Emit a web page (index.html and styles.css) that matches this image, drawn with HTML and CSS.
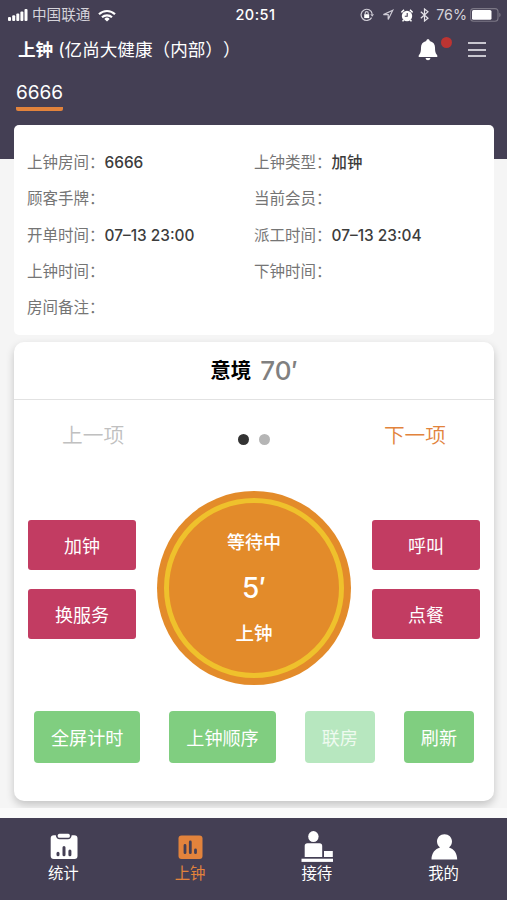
FILE: index.html
```
<!DOCTYPE html>
<html lang="zh-CN">
<head>
<meta charset="UTF-8">
<meta name="viewport" content="width=device-width, initial-scale=1">
<link rel="stylesheet" href="styles.css">
<title>上钟</title>
</head>
<body>

<header class="header">
  <div class="status-bar">
    <div class="status-left">
      <svg class="signal" width="20" height="12" viewBox="0 0 20 12" fill="#fff">
        <rect x="0" y="8" width="3" height="4" rx="1"/>
        <rect x="4.2" y="6.3" width="3" height="5.7" rx="1"/>
        <rect x="8.3" y="4.5" width="3" height="7.5" rx="1"/>
        <rect x="12.4" y="2.4" width="3" height="9.6" rx="1"/>
        <rect x="16.5" y="0" width="3" height="12" rx="1"/>
      </svg>
      <span class="carrier">中国联通</span>
      <svg width="18" height="13" viewBox="0 0 18 13" fill="none" stroke="#fff" stroke-width="2.2">
        <path d="M1 5.2A11.6 11.6 0 0 1 17 5.2"/>
        <path d="M4 8.3A7.2 7.2 0 0 1 14 8.3"/>
        <path d="M9 12.6L6.3 9.9A3.9 3.9 0 0 1 11.7 9.9Z" fill="#fff" stroke="none"/>
      </svg>
    </div>
    <div class="clock">20:51</div>
    <div class="status-right">
      <svg width="14" height="14" viewBox="0 0 14 14" fill="none" stroke="#cfccd6" stroke-width="1.2">
        <path d="M11.6 9.6A5.6 5.6 0 1 1 12.2 5.8"/>
        <path d="M10.3 6.2H14L12.2 8.8Z" fill="#cfccd6" stroke="none"/>
        <rect x="4.2" y="6.2" width="5" height="3.9" fill="#fff" stroke="none"/>
        <path d="M5.2 6.4V5.2a1.5 1.5 0 0 1 3 0V6.4"/>
      </svg>
      <svg class="arrow" width="12" height="12" viewBox="0 0 12 12" fill="none" stroke="#cfccd6" stroke-width="1.2">
        <path d="M10.8 1.2L1.4 5.6H6.2V10.6Z"/>
      </svg>
      <svg class="alarm" width="12" height="13" viewBox="0 0 12 13" fill="#fff">
        <circle cx="6" cy="7" r="5.2"/>
        <path d="M.4 3.4L3 .8M11.6 3.4L9 .8M2.6 11l-1 1.4M9.4 11l1 1.4" stroke="#fff" stroke-width="1.5"/>
        <path d="M6.2 4V7.3H3.8" fill="none" stroke="#443f54" stroke-width="1.1"/>
      </svg>
      <svg class="bluetooth" width="9" height="14" viewBox="0 0 9 14" fill="none" stroke="#e4e2e8" stroke-width="1.2">
        <path d="M.8 3.8L8 10.2L4.5 13V1L8 3.8L.8 10.2"/>
      </svg>
      <span class="percent">76%</span>
      <svg class="battery" width="31" height="14" viewBox="0 0 31 14">
        <rect x=".6" y=".6" width="27.4" height="12.6" rx="3" fill="none" stroke="#7b7785" stroke-width="1.1"/>
        <rect x="2" y="2" width="19.5" height="9.8" rx="1.5" fill="#fff"/>
        <path d="M29.3 4.8v4.4q1.3-.6 1.3-2.2t-1.3-2.2z" fill="#7b7785"/>
      </svg>
    </div>
  </div>

  <div class="title-bar">
    <h1><b>上钟</b> <span class="store">(亿尚大健康（内部））</span></h1>
    <div class="actions">
      <div class="bell">
        <svg width="20" height="22" viewBox="0 0 20 22" fill="#fff">
          <path d="M10 .3c1 0 1.7.7 1.7 1.6C15.2 2.7 17 5.2 17 8.3c0 4.2.4 5.7 1.6 7.2.4.4.7.8.7 1.3v1.1H.7v-1.1c0-.5.3-.9.7-1.3C2.6 14 3 12.5 3 8.3 3 5.2 4.800 2.7 8.3 1.9 8.3 1 9 .3 10 .3z"/>
          <path d="M7.5 19h5q-.4 2.2-2.5 2.2T7.5 19z"/>
        </svg>
        <i class="badge"></i>
      </div>
      <div class="menu"><i></i><i></i><i></i></div>
    </div>
  </div>

  <div class="tabs"><span class="tab">6666</span></div>
</header>

<main>
  <section class="card info">
    <div class="cell">上钟房间：<b>6666</b></div>
    <div class="cell">上钟类型：<b>加钟</b></div>
    <div class="cell">顾客手牌：</div>
    <div class="cell">当前会员：</div>
    <div class="cell">开单时间：<b>07–13 23:00</b></div>
    <div class="cell">派工时间：<b>07–13 23:04</b></div>
    <div class="cell">上钟时间：</div>
    <div class="cell">下钟时间：</div>
    <div class="cell">房间备注：</div>
  </section>

  <section class="card service">
    <h2>意境 <span>70′</span></h2>
    <div class="switch">
      <span class="prev">上一项</span>
      <div class="dots"><i class="on"></i><i></i></div>
      <span class="next">下一项</span>
    </div>
    <div class="control">
      <div class="side">
        <button class="btn-red">加钟</button>
        <button class="btn-red">换服务</button>
      </div>
      <div class="dial">
        <div class="ring">
          <span class="state">等待中</span>
          <span class="minutes">5′</span>
          <span class="go">上钟</span>
        </div>
      </div>
      <div class="side">
        <button class="btn-red">呼叫</button>
        <button class="btn-red">点餐</button>
      </div>
    </div>
    <div class="tools">
      <button class="btn-green">全屏计时</button>
      <button class="btn-green">上钟顺序</button>
      <button class="btn-green disabled">联房</button>
      <button class="btn-green">刷新</button>
    </div>
  </section>
</main>

<nav class="tabbar">
  <a class="item">
    <svg width="32" height="32" viewBox="-1 0 32 32">
      <path d="M5.8 5.2H7.8Q8.4 9.2 11.5 9.2H20Q23 9.2 23.7 5.2H26.2Q29.5 5.2 29.5 8.2V25.9Q29.5 28.9 26.5 28.9H5.7Q2.7 28.9 2.7 25.9V8.2Q2.7 5.2 5.8 5.2Z" fill="#fff"/>
      <rect x="9.8" y="3.8" width="12" height="4" rx="1.5" fill="#fff"/>
      <path d="M10 23.2v1.500M16 17.500v7.200M21.900 21v3.700" stroke="#443f54" stroke-width="3" stroke-linecap="round"/>
    </svg>
    <span>统计</span>
  </a>
  <a class="item active">
    <svg width="32" height="32" viewBox="0 0 32 32">
      <rect x="4.5" y="5.4" width="24" height="23.6" rx="3" fill="#e2833c"/>
      <path d="M11 15.5v7.2M16.3 12v10.700M21.500 20v2.700" stroke="#443f54" stroke-width="2.8" stroke-linecap="round"/>
    </svg>
    <span>上钟</span>
  </a>
  <a class="item">
    <svg width="32" height="32" viewBox="0 0 32 32" fill="#fff">
      <ellipse cx="12.4" cy="6.6" rx="5.2" ry="5.5"/>
      <path d="M3.7 27V16q0-2.7 2.7-2.7H18.5q2.7 0 2.7 2.7V27z"/>
      <rect x="23" y="21" width="8.8" height="6"/>
      <rect x=".5" y="28.7" width="31.5" height="3.2"/>
    </svg>
    <span>接待</span>
  </a>
  <a class="item">
    <svg width="32" height="32" viewBox="0 0 32 32" fill="#fff">
      <path d="M16.5 4.2c4.3 0 7.5 3.2 7.5 7.3 0 2.7-1.3 4.5-3 5.9 4.8 1.3 8.2 5.6 8.2 12.2H3.5c0-6.6 3.7-10.9 8.5-12.2-1.7-1.4-3-3.2-3-5.9 0-4.1 3.2-7.3 7.5-7.3z"/>
    </svg>
    <span>我的</span>
  </a>
</nav>

</body>
</html>
```
FILE: styles.css
```
* {box-sizing: border-box;}
html, body {margin: 0; padding: 0;}
body {
  height: 900px; display: flex; flex-direction: column; overflow: hidden;
  font-family: Inter, "Noto Sans CJK SC", sans-serif;
  background: #f5f5f5; color: #333;
  text-spacing-trim: space-all;
}
h1, h2 {margin: 0; font-weight: normal;}
svg {display: block; flex: none;}
button {border: 0; padding: 0; font-family: inherit; color: #fff;}

/* header */
.header {height: 159px; flex: none; background: #443f54; color: #fff;}
.status-bar {
  height: 30px; padding: 0 6px 0 8px;
  display: grid; grid-template-columns: 1fr auto 1fr; align-items: center;
}
.status-left, .status-right {display: flex; align-items: center;}
.status-right {justify-content: flex-end;}
.carrier {font-size: 14.6px; line-height: 20px; margin: 0 8px 0 4px; color: #d5d3da;}
.clock {font-size: 14.5px; font-weight: 500; line-height: 20px; letter-spacing: 0.5px; padding-left: 2px;}
.arrow {margin-left: 8px;}
.alarm {margin-left: 7px;}
.bluetooth {margin-left: 7px;}
.percent {font-size: 14.3px; line-height: 20px; margin: 0 3px 0 7px; color: #d5d3da;}

.title-bar {
  height: 40px; padding: 0 21px 0 18px;
  display: flex; align-items: center; justify-content: space-between;
}
.title-bar h1 {font-size: 17.6px; line-height: 26px; white-space: nowrap;}
.title-bar b {font-weight: 700;}
.actions {display: flex; align-items: center; gap: 21px;}
.bell {position: relative; width: 28px; margin-right: 1px;}
.badge {
  position: absolute; right: -6px; top: -2px;
  width: 11px; height: 11px; border-radius: 50%; background: #bd3432;
}
.menu {width: 18px; display: flex; flex-direction: column; gap: 4.5px; margin-top: -1px;}
.menu i {height: 2px; background: #c9c7d0;}

.tabs {padding: 9px 16px 0;}
.tab {
  display: inline-block; height: 32px; line-height: 28px; font-size: 19px;
  border-bottom: 4px solid #e2833c; border-radius: 0 0 2px 2px;
}

/* cards */
main {height: 683px; flex: none; margin-top: -34px; padding: 0 13px 0 14px; overflow: hidden;}
.card {background: #fff;}
.info {
  height: 210px; padding: 20px 0 0 13px; border-radius: 5px;
  display: grid; grid-template-columns: 227px 1fr; grid-auto-rows: 36.3px;
}
.cell {font-size: 15.5px; line-height: 36px; color: #757575; white-space: nowrap;}
.cell b {font-size: 15.4px; font-weight: 500; color: #3c3c3c;}
.service {
  height: 459px; margin-top: 7px; border-radius: 10px;
  box-shadow: 0 4px 8px rgba(0, 0, 0, 0.2);
}
.service h2 {
  height: 58px; border-bottom: 1px solid #e2e2e2;
  display: flex; align-items: center; justify-content: center; gap: 9px;
  font-size: 20.5px; line-height: 30px; font-weight: 700; color: #000;
}
.service h2 span {font-size: 26px; font-weight: 500; color: #808080;}
.switch {
  height: 72px; padding: 0 48px;
  display: flex; align-items: center; justify-content: space-between;
  font-size: 20.7px; line-height: 30px; font-weight: 350;
}
.prev {color: #c0c0c0;}
.next {color: #e2833c;}
.dots {display: flex; gap: 10px; padding-top: 6px;}
.dots i {width: 11px; height: 11px; border-radius: 50%; background: #b5b5b5;}
.dots .on {background: #333;}

.control {
  height: 194px; margin-top: 19px; padding: 0 14px;
  display: flex; align-items: center; justify-content: space-between;
}
.side {display: flex; flex-direction: column; gap: 19px; margin-top: -17px;}
.btn-red {
  width: 108px; height: 50px; padding-bottom: 1px; border-radius: 3px;
  background: #c23c62; font-size: 18px;
}
.dial {width: 194px; height: 194px; padding: 7px; border-radius: 50%; background: #e38b2a;}
.ring {
  height: 180px; border: 5px solid #efc12c; border-radius: 50%;
  display: flex; flex-direction: column; align-items: center;
  color: #fff; font-weight: 500;
}
.state {font-size: 18px; line-height: 28px; margin-top: 26px;}
.minutes {font-size: 28px; line-height: 40px; margin-top: 11px;}
.go {font-size: 18.5px; line-height: 28px; margin-top: 11px;}

.tools {display: flex; justify-content: space-between; margin-top: 26px; padding: 0 20px;}
.btn-green {
  height: 52px; padding: 0 17px 1px; border-radius: 4px;
  background: #80ce80; font-size: 18.1px;
}
.btn-green.disabled {background: #b7e7bf; color: #eefaef;}

/* bottom tab bar */
.tabbar {
  height: 82px; margin-top: auto; flex: none; display: flex;
  background: #443f54; box-shadow: 0 -10px 0 #fafafa; color: #fff;
}
.item {
  flex: 1; padding-top: 12px;
  display: flex; flex-direction: column; align-items: center;
  font-size: 15.4px; line-height: 24px;
}
.active {color: #e2833c;}
```
